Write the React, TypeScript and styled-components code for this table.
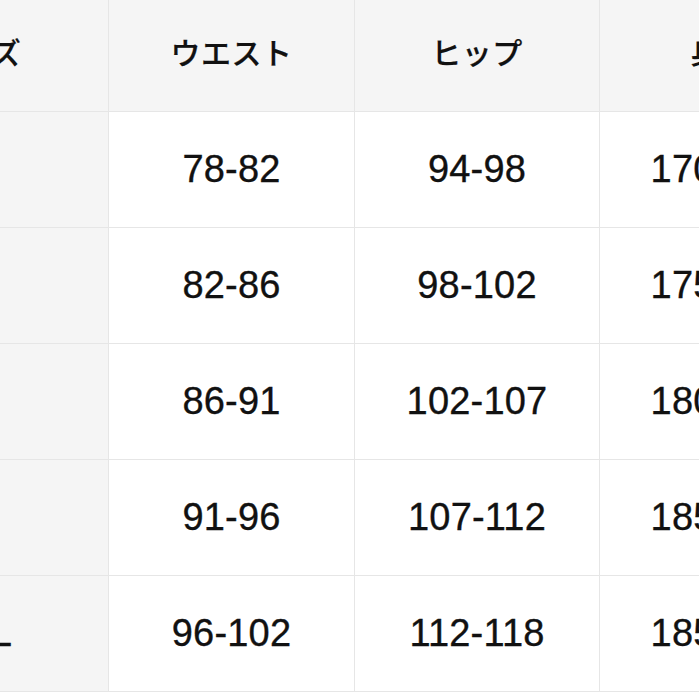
import React from "react";
import styled, { createGlobalStyle } from "styled-components";

const Global = createGlobalStyle`
  html, body { margin: 0; padding: 0; background: #ffffff; }
  #root { width: 699px; height: 699px; }
`;

const Page = styled.div`
  width: 699px;
  height: 699px;
  overflow: hidden;
  background: #ffffff;
`;

const Table = styled.div`
  display: grid;
  grid-template-columns: 264px 245px 244px 242px;
  grid-template-rows: 111px repeat(5, 115px);
  gap: 1px;
  margin-left: -156px;
  width: max-content;
  background: #e6e6e6;
  border-bottom: 1px solid #e6e6e6;
`;

const Cell = styled.div<{ $shade?: boolean }>`
  display: flex;
  align-items: center;
  justify-content: center;
  background: ${(p) => (p.$shade ? "#f5f5f5" : "#ffffff")};
  color: #111111;
  font-family: "Liberation Sans", Arial, sans-serif;
  font-size: 38px;
  letter-spacing: 0.2px;
  -webkit-text-stroke: 0.35px #111111;
`;

const HeaderCell = styled(Cell)`
  background: #f5f5f5;
  font-family: "Noto Sans CJK JP", "Noto Sans", sans-serif;
  font-size: 30px;
  font-weight: 500;
  letter-spacing: 0.5px;
  -webkit-text-stroke: 0.2px #111111;
  padding-bottom: 10px;
  box-sizing: border-box;
`;

const headers = ["サイズ", "ウエスト", "ヒップ", "身長"];
const rows = [
  ["S", "78-82", "94-98", "170-175"],
  ["M", "82-86", "98-102", "175-180"],
  ["L", "86-91", "102-107", "180-185"],
  ["XL", "91-96", "107-112", "185-190"],
  ["XXL", "96-102", "112-118", "185-190"],
];

export default function App() {
  return (
    <>
      <Global />
      <Page>
        <Table>
          {headers.map((h) => (
            <HeaderCell key={h}>{h}</HeaderCell>
          ))}
          {rows.map((r) =>
            r.map((v, i) => (
              <Cell key={r[0] + i} $shade={i === 0}>
                {v}
              </Cell>
            ))
          )}
        </Table>
      </Page>
    </>
  );
}
